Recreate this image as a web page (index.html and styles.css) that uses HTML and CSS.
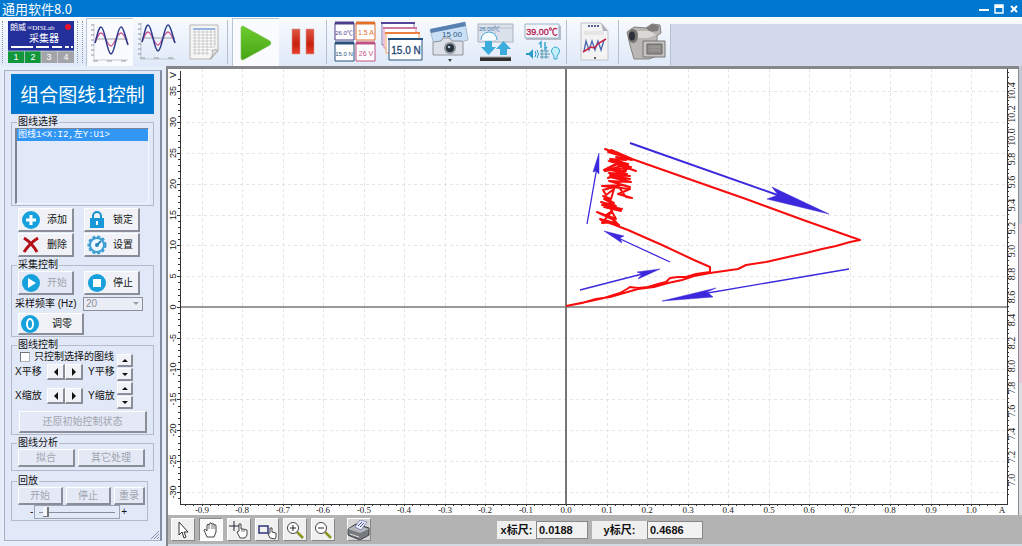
FILE: index.html
```html
<!DOCTYPE html>
<html lang="zh-CN">
<head>
    <meta charset="UTF-8">
    <title>通用软件8.0</title>
    <link rel="stylesheet" href="styles.css">
</head>
<body>
    <header class="titlebar">
        <h1>通用软件8.0</h1>
        <div class="window-buttons">
            <button aria-label="最小化"><svg width="10" height="10"><path d="M0 5h10v2H0z" fill="#fff"/></svg></button>
            <button aria-label="还原"><svg width="10" height="10"><path d="M1 1h8v8H1z" fill="none" stroke="#fff" stroke-width="1.4"/><path d="M1 1h8v3H1z" fill="#fff"/></svg></button>
            <button aria-label="关闭"><svg width="10" height="10"><path d="M2 2l6 6M8 2L2 8" stroke="#fff" stroke-width="2"/></svg></button>
        </div>
    </header>

    <nav class="toolbar">
        <span class="grip"></span>
        <button class="logger" aria-label="采集器">
            <svg width="66" height="42" viewBox="0 0 66 42">
                <rect width="66" height="42" fill="#24309a"/>
                <text x="2" y="9" font-size="8" fill="#fff">朗威</text>
                <text x="19" y="9" font-size="7" fill="#fff" class="serif">®DISLab</text>
                <circle cx="60" cy="6" r="3" fill="#e8102c"/>
                <text x="21" y="21" font-size="10" fill="#fff">采集器</text>
                <path d="M3 26h22M28 26h13M44 26h10M57 26h4M63 26h2" stroke="#fff" stroke-width="2"/>
                <rect y="30" width="33" height="12" fill="#12963c"/>
                <rect x="33" y="30" width="33" height="12" fill="#a2a4a8"/>
                <path d="M16.500 30v12M33 30v12M49.500 30v12M0 30h66" stroke="#dde" stroke-width=".7"/>
                <g font-size="9" fill="#fff" text-anchor="middle"><text x="8" y="39">1</text><text x="25" y="39">2</text><text x="41" y="39">3</text><text x="58" y="39">4</text></g>
            </svg>
        </button>
        <span class="grip wide"></span>
        <button class="tool on" aria-label="示波">
            <svg width="42" height="42" viewBox="0 0 42 42">
                <path d="M5 2v35M4 38h35" stroke="#b9bec8" stroke-width=".8"/>
                <path d="M2 3h3M2 8h3M2 13h3M2 18h3M2 23h3M2 28h3M2 33h3" stroke="#8c919c"/>
                <path d="M6 17h33" stroke="#888" stroke-width=".8"/>
                <path d="M4 39h5M18 39h5M32 39h5" stroke="#999"/>
                <path d="M6 21C9 13 10 11 12 11c4 0 6 13 10 13 3 0 6-13 10-13 3 0 4 5 7 11" fill="none" stroke="#cf5a94" stroke-width="1.300"/>
                <path d="M6 21C9 10 10 5 12 5c4 0 6 27 10 27S28 5 32 5c3 0 4 10 7 18" fill="none" stroke="#2c3a8c" stroke-width="1.500"/>
            </svg>
        </button>
        <button class="tool" aria-label="组合图线">
            <svg width="42" height="42" viewBox="0 0 42 42">
                <path d="M5 2v35M4 38h35" stroke="#b9bec8" stroke-width=".8"/>
                <path d="M2 3h3M2 8h3M2 13h3M2 18h3M2 23h3M2 28h3M2 33h3" stroke="#8c919c"/>
                <path d="M6 17h33" stroke="#888" stroke-width=".8"/>
                <path d="M4 37h5M18 37h5M32 37h5" stroke="#999"/>
                <path d="M6 21C9 13 10 11 12 11c4 0 6 13 10 13 3 0 6-13 10-13 3 0 4 5 7 11" fill="none" stroke="#cf5a94" stroke-width="1.300"/>
                <path d="M6 21C9 10 10 4 12 4c4 0 6 26 10 26S28 4 32 4c3 0 4 10 7 18" fill="none" stroke="#2c3a8c" stroke-width="1.500"/>
            </svg>
        </button>
        <button class="tool" aria-label="数据表">
            <svg width="32" height="38" viewBox="0 0 32 38">
                <path d="M2 2h28v26l-7 8H2z" fill="#f5f5f5" stroke="#b5b5b5"/>
                <path d="M6 5h20v25H6z" fill="#fff"/>
                <path d="M5 6h22" stroke="#8fb4e8" stroke-width="2"/>
                <path d="M5 9h22M5 12h22M5 15h22M5 18h22M5 21h22M5 24h22M5 27h20M5 30h16M7 5v27M11 5v27M15 5v27M19 5v27M23 5v20M27 5v18" stroke="#b9b9b9" stroke-width=".7" fill="none"/>
                <path d="M30 27c-3-1-6 0-6 1 1 3 0 6-2 8z" fill="#ddd" stroke="#999" stroke-width=".7"/>
            </svg>
        </button>
        <span class="sep"></span>
        <button class="tool on" aria-label="开始">
            <svg width="34" height="36" viewBox="0 0 34 36">
                <defs><linearGradient id="green" x2="0" y2="1"><stop stop-color="#6ccc2c"/><stop offset="1" stop-color="#48a418"/></linearGradient></defs>
                <path d="M4 1l27 15q2 2 0 4L4 35q-2 0-2-2V3q0-2 2-2z" fill="url(#green)" stroke="#7cbf54" stroke-width=".6"/>
            </svg>
        </button>
        <button class="tool" aria-label="暂停">
            <svg width="24" height="28" viewBox="0 0 24 28">
                <defs><linearGradient id="red" x2="0" y2="1"><stop stop-color="#e05848"/><stop offset=".6" stop-color="#c8200c"/><stop offset="1" stop-color="#e84030"/></linearGradient></defs>
                <path d="M1 1h8v25H1zM15 1h8v25h-8z" fill="url(#red)" stroke="#d89a94" stroke-width=".6"/>
            </svg>
        </button>
        <span class="sep"></span>
        <button class="tool" aria-label="数字窗口">
            <svg width="42" height="42" viewBox="0 0 42 42" class="digits">
                <path d="M1 2h19v17H1zM1 22h19v18H1zM22 2h19v17H22zM22 22h19v18H22z" fill="#fff"/>
                <path d="M1 2h19v17H1z" fill="none" stroke="#4c3c8c"/><path d="M1 2h19" stroke="#4c3c8c" stroke-width="3"/>
                <path d="M22 2h19v17H22z" fill="none" stroke="#e0702c"/><path d="M22 2h19" stroke="#e0702c" stroke-width="3"/>
                <path d="M1 22h19v18H1z" fill="none" stroke="#28507c"/><path d="M1 22h19" stroke="#28507c" stroke-width="3"/>
                <path d="M22 22h19v18H22z" fill="none" stroke="#c05080"/><path d="M22 22h19" stroke="#c05080" stroke-width="3"/>
                <g text-anchor="middle"><text class="long" x="10" y="14" fill="#4c3c8c">26.0℃</text><text x="32" y="14" fill="#e0702c">1.5 A</text><text class="long" x="10" y="35" fill="#28507c">15.0 N</text><text x="32" y="35" fill="#c05080">26 V</text></g>
            </svg>
        </button>
        <button class="tool" aria-label="层叠窗口">
            <svg width="42" height="40" viewBox="0 0 42 40">
                <g fill="#fff" stroke-width="1">
                    <path d="M1 1h32v22H1z" stroke="#8074b8"/><path d="M0 1h34" stroke="#544498" stroke-width="2"/>
                    <path d="M3 6h32v20H3z" stroke="#dc88b0"/><path d="M2 6h34" stroke="#cc78a0" stroke-width="2"/>
                    <path d="M5 11h33v20H5z" stroke="#f0a060"/><path d="M4 11h35" stroke="#ec8040" stroke-width="2"/>
                    <path d="M8 17h33v21H8z" stroke="#28507c"/><path d="M7 17h35" stroke="#28507c" stroke-width="2"/>
                </g>
                <text x="25" y="32" font-size="10" fill="#1c4474" stroke="#1c4474" stroke-width=".3" text-anchor="middle">15.0 N</text>
            </svg>
        </button>
        <button class="tool" aria-label="快照">
            <svg width="40" height="42" viewBox="0 0 40 42">
                <path d="M1 9L36 1l3 18L6 27z" fill="#c9dff5" stroke="#a8b8cc"/>
                <path d="M1 8l35-7 1 4L2 12z" fill="#5880b0"/>
                <text x="13" y="16" font-size="8" fill="#305880">15 00</text>
                <path d="M4 21l8-1 2-3h7l2 3h9q2 0 2 2v12H4z" fill="#dde0e6" stroke="#8c929c"/>
                <circle cx="21" cy="27" r="6" fill="#8c949c"/><circle cx="21" cy="27" r="4" fill="#26303c"/><circle cx="20" cy="26" r="1.300" fill="#b8c8d8"/>
                <path d="M19 38h4l-2 3z" fill="#444"/>
            </svg>
        </button>
        <button class="tool" aria-label="导入导出">
            <svg width="38" height="40" viewBox="0 0 38 40">
                <path d="M1 2h35v18H1z" fill="#dce2ec" stroke="#a9b2c0"/><path d="M2 6h34M18 2v18" stroke="#b8c0cc"/>
                <text x="2" y="9" font-size="6" fill="#447ab4">26.00℃</text>
                <path d="M4 18a8 8 0 0 1 16 0" fill="#f5fbff" stroke="#4ca8d8"/>
                <path d="M8 19h7v6h4l-7.500 8L4 25h4zM23 33h7v-6h4l-7.500-8-7.500 8h4z" fill="#3cacdc"/>
                <path d="M3 35h31v4H3z" fill="#34302e"/><path d="M3 35h31" stroke="#a6a6a6"/>
            </svg>
        </button>
        <button class="tool" aria-label="传感器">
            <svg width="38" height="40" viewBox="0 0 38 40">
                <path d="M2 4h35v14H2z" fill="#b5bcc8"/><path d="M1 2h34v14H1z" fill="#f4f8fc" stroke="#9cb0c4"/>
                <text x="18" y="13" font-size="9" fill="#b81850" stroke="#b81850" stroke-width=".3" text-anchor="middle">39.00℃</text>
                <path d="M17 26v-6l-2 2M21 20v7l2-2" fill="none" stroke="#38a8d0" stroke-width="1.500"/>
                <path d="M2 31h3l4-4v10l-4-4H2z" fill="#2c9ccc"/><path d="M11 29q2 3 0 6M13 28q3 4 0 8" stroke="#2c9ccc" fill="none"/>
                <path d="M16 29h9M16 32h10M16 35h9M18 27v10M22 27v10" stroke="#5a9ab0"/>
                <path d="M30 34l-2-3a4 4 0 1 1 7 0l-2 3v3h-3z" fill="#c4f0fa" stroke="#38a8d0"/>
            </svg>
        </button>
        <span class="sep"></span>
        <button class="tool" aria-label="实验报告">
            <svg width="30" height="40" viewBox="0 0 30 40">
                <path d="M1 1h20l7 8v29H1z" fill="#f3f3f4" stroke="#c4c4c8"/><path d="M21 1l7 8h-5z" fill="#b0b2c0"/>
                <path d="M8 4h12" stroke="#5860a0" stroke-width="2" stroke-dasharray="2 1"/><path d="M4 10h20M4 12h20" stroke="#ccc" stroke-width=".7"/>
                <path d="M4 29l2-10 3 9 3-9 3 9 3-9 3 9 3-10" fill="none" stroke="#4464b0" stroke-width="1.300"/>
                <path d="M3 30l8-5 3 1 5-5 7-4" fill="none" stroke="#cc2040" stroke-width="1.500"/><circle cx="15" cy="36" r="1" fill="#333"/>
            </svg>
        </button>
        <span class="sep"></span>
        <button class="tool" aria-label="录像">
            <svg width="42" height="38" viewBox="0 0 42 38">
                <path d="M1 9l7-5 12 1 6-4 8 1 1 8-4 3v20l-8 3H8L4 22z" fill="#b9b7b4" stroke="#83817f"/>
                <path d="M20 5l6-4 7 2-1 5-8 1z" fill="#7d7c7a"/>
                <path d="M12 8h12l6 4-8 3H12z" fill="#dad8d5"/>
                <ellipse cx="7" cy="13" rx="5" ry="7" fill="#777572"/><ellipse cx="6" cy="13" rx="3" ry="4.500" fill="#2d3038"/>
                <path d="M17 18h22v16H17z" fill="#c4c3bf" stroke="#777"/><path d="M21 21h15v10H21z" fill="#8c8b88" stroke="#686765"/>
                <path d="M23 24h11M23 27h11" stroke="#a4a29d"/>
            </svg>
        </button>
        <span class="toolbar-rest"></span>
    </nav>

    <main class="workspace">
        <aside class="sidebar">
            <div class="panel">
                <h2>组合图线1控制</h2>

                <fieldset>
                    <legend>图线选择</legend>
                    <ul class="listbox">
                        <li class="selected">图线1&lt;X:I2,左Y:U1&gt;</li>
                    </ul>
                </fieldset>

                <div class="button-grid outer">
                    <button class="btn"><svg width="20" height="20"><circle cx="10" cy="10" r="9" fill="#16a0dc"/><path d="M10 5v10M5 10h10" stroke="#fff" stroke-width="3"/></svg>添加</button>
                    <button class="btn"><svg width="20" height="20"><path d="M6 9V6a4 4 0 0 1 8 0v3" fill="none" stroke="#1890cc" stroke-width="2"/><path d="M3 8h14v10H3z" fill="#1898d8"/><path d="M10 11v4" stroke="#fff" stroke-width="2"/></svg>锁定</button>
                    <button class="btn"><svg width="20" height="20"><path d="M3 3q8 5 13 14M17 3Q9 8 3 17" fill="none" stroke="#b41018" stroke-width="3"/></svg>删除</button>
                    <button class="btn"><svg width="20" height="20"><circle cx="10" cy="10" r="7" fill="#eef8ff" stroke="#3c9cd4" stroke-width="2"/><circle cx="10" cy="10" r="8.500" fill="none" stroke="#3c9cd4" stroke-width="2" stroke-dasharray="3 2"/><circle cx="10" cy="10" r="2" fill="#2c84bc"/><path d="M10 10l4-4" stroke="#2c84bc" stroke-width="2"/></svg>设置</button>
                </div>

                <fieldset>
                    <legend>采集控制</legend>
                    <div class="button-grid">
                        <button class="btn" disabled><svg width="20" height="20"><circle cx="10" cy="10" r="9" fill="#16a0dc"/><path d="M7 5l8 5-8 5z" fill="#fff"/></svg>开始</button>
                        <button class="btn"><svg width="20" height="20"><circle cx="10" cy="10" r="9" fill="#16a0dc"/><path d="M6 6h8v8H6z" fill="#fff"/></svg>停止</button>
                    </div>
                    <div class="rate">
                        <label for="rate">采样频率 (Hz)</label>
                        <span class="combo"><select id="rate" disabled><option>20</option></select></span>
                    </div>
                    <button class="btn zero"><svg width="20" height="20"><circle cx="10" cy="10" r="9" fill="#16a0dc"/><ellipse cx="10" cy="10" rx="3" ry="5" fill="none" stroke="#fff" stroke-width="2"/></svg>调零</button>
                </fieldset>

                <fieldset class="control">
                    <legend>图线控制</legend>
                    <div class="control-body">
                        <div class="control-left">
                            <div class="check"><input type="checkbox" id="only"><label for="only">只控制选择的图线</label></div>
                            <div class="shift"><span>X平移</span><button class="btn" aria-label="左移"><i class="left"></i></button><button class="btn" aria-label="右移"><i class="right"></i></button><span>Y平移</span></div>
                            <div class="shift"><span>X缩放</span><button class="btn" aria-label="横向缩小"><i class="left"></i></button><button class="btn" aria-label="横向放大"><i class="right"></i></button><span>Y缩放</span></div>
                        </div>
                        <div class="spin">
                            <button class="btn" aria-label="上移"><i class="up"></i></button>
                            <button class="btn" aria-label="下移"><i class="down"></i></button>
                            <button class="btn" aria-label="纵向放大"><i class="up"></i></button>
                            <button class="btn" aria-label="纵向缩小"><i class="down"></i></button>
                        </div>
                    </div>
                    <button class="btn restore" disabled>还原初始控制状态</button>
                </fieldset>

                <fieldset class="analysis">
                    <legend>图线分析</legend>
                    <div class="row">
                        <button class="btn" disabled>拟合</button>
                        <button class="btn" disabled>其它处理</button>
                    </div>
                </fieldset>

                <fieldset class="replay">
                    <legend>回放</legend>
                    <div class="row">
                        <button class="btn" disabled>开始</button>
                        <button class="btn" disabled>停止</button>
                        <button class="btn" disabled>重录</button>
                    </div>
                    <div class="speed">
                        <span>-</span><input type="range" min="0" max="10" value="1" aria-label="回放速度"><span>+</span>
                    </div>
                </fieldset>
                <svg class="resize" width="8" height="8"><path d="M0 8l8-8M3 8l5-5M6 8l2-2" stroke="#8890a0"/></svg>
            </div>
        </aside>

        <section class="view">
            <div class="plot">
                <!-- origin of the viewBox is the zero point of both axes -->
                <svg id="chart" viewBox="-398 -238 850 446">
                    <g id="grid"></g>
                    <path class="zero-x" d="M-386 0H441"/>
                    <path class="zero-y" d="M0-238V197"/>
                    <path class="axis" d="M-386-236V197H441V-238"/>
                    <g id="ticks"></g>
                    <g id="labels">
                        <text class="y-label" transform="translate(-390 -232) rotate(-90)">V</text>
                        <text class="x-label" x="436" y="206">A</text>
                    </g>
                    <path class="trace" d="M0-1L20-5 38-9 54-14 61-18 64-20 72-19 82-20 92-23 100-25 104-29 112-30 120-30 130-33 144-35 144-40 128-47 96-62 62-77 54-80
                        L49-82 35-87 49-84 34-88 52-82 36-86 53-82 46-88 31-95 44-90 50-85 36-84 46-96 40-92 50-88 44-99 55-96 38-100 56-98 36-102 50-99 35-105 50-101 38-108
                        L48-104 37-111 45-108 48-118 40-112 37-117 52-121 60-110 66-109 52-113 64-118 36-121 56-122 64-120 43-126 65-125 44-130 64-128 44-132 64-131 43-134 61-133
                        L45-137 60-136 42-129 65-140 52-138 39-136 55-141 70-136 50-143 38-137 56-145 64-140 43-146 62-143 44-148 60-147 50-150 66-147
                        L39-158 66-148 50-155 42-155 66-148 45-157 66-148 120-129 180-108 240-86 294-67 284-65 270-61 256-58 240-54 222-50 200-45 180-42 172-38 158-36 144-34 128-31 116-27 102-24 88-20 72-18 58-14 44-10 30-8 16-4 0-1"/>
                    <g class="arrow">
                        <path d="M14-17L80-34M104-45L50-70M21-83L31-140M283-38L130-12"/>
                        <path class="strong" d="M64-164L220-109"/>
                        <path class="head" d="M94-38L71-35 76-33 72-28zM38-76L58-71 54-69 56-64zM33-154L27-135 30-136 33-133zM263-93L206-120 212-112 201-108zM96-6L150-19 141-15 147-10z"/>
                    </g>
                </svg>
            </div>

            <footer class="statusbar">
                <div class="modes">
                    <button aria-label="选择"><svg width="22" height="20"><path d="M7 2v13l3-3 2 6 2-1-2-5h4z" fill="#fff" stroke="#333"/></svg></button>
                    <button class="on" aria-label="拖动"><svg width="22" height="20"><path d="M7 17L4 10q1-2 3 1V5q1-2 2 0l1-2q1-1 2 1 2-1 2 1 2-1 2 1v6l-2 5z" fill="#fff" stroke="#444"/><path d="M9 5v4M12 4v5M14 5v4" stroke="#777"/></svg></button>
                    <button aria-label="取点"><svg width="22" height="20"><path d="M6 1v10M1 6h10" stroke="#223"/><path d="M12 18l-3-6 2-1V4h2v5h2l4 1v5l-2 3z" fill="#fff" stroke="#444"/><path d="M14 9v3M16 9v3" stroke="#777"/></svg></button>
                    <button aria-label="框选"><svg width="22" height="20"><path d="M3 6h9v7H3z" fill="none" stroke="#2c3478" stroke-width="1.500"/><path d="M14 18l-2-4 2-1V8h2v4l4 1v4l-1 2z" fill="#fff" stroke="#444"/></svg></button>
                    <button aria-label="放大"><svg width="22" height="20"><path d="M13 12l6 6" stroke="#8c9420" stroke-width="2.500"/><circle cx="9" cy="8" r="5.500" fill="#fff" stroke="#444"/><path d="M6 8h6M9 5v6" stroke="#222"/></svg></button>
                    <button aria-label="缩小"><svg width="22" height="20"><path d="M13 12l6 6" stroke="#8c9420" stroke-width="2.500"/><circle cx="9" cy="8" r="5.500" fill="#fff" stroke="#444"/><path d="M6 8h6" stroke="#222"/></svg></button>
                    <button class="print" aria-label="打印"><svg width="24" height="20"><path d="M1 9l8-5 13 4v7l-9 5L1 15z" fill="#777b80" stroke="#3c3e42"/><path d="M1 9l8-4 13 4-9 4z" fill="#b4b8bc"/><path d="M8 7l5-7 7 2-6 8z" fill="#eef0fa" stroke="#6068a0" stroke-width=".7"/><path d="M11 6l4-4M13 7l4-4" stroke="#404890"/><path d="M3 14l9 3" stroke="#ddd"/></svg></button>
                </div>
                <div class="readout">
                    <label for="xpos">x标尺:</label><input id="xpos" value="0.0188" readonly>
                    <label for="ypos" class="y-name">y标尺:</label><input id="ypos" value="0.4686" readonly>
                </div>
            </footer>
        </section>
        <div class="edge"></div>
    </main>

    <script>
        const LEFT = -386, RIGHT = 441, TOP = -238, BOTTOM = 197;
        const X_STEP = 40.5;   // 0.1 A
        const Y_STEP = 30.8;   // 5 V
        const R_STEP = 22.9;   // 0.2 on the right axis

        let grid = '';
        let ticks = '';
        let labels = '';

        function line(x1, y1, x2, y2) {
            return `<path d="M${x1} ${y1}L${x2} ${y2}"/>`;
        }

        for (let i = -9; i <= 10; i++) {
            const x = Math.round(i * X_STEP);
            grid += line(x, TOP, x, BOTTOM);
            labels += `<text class="x-label" x="${x}" y="206">${(i / 10).toFixed(1)}</text>`;
        }
        for (let i = -47; i <= 53; i++) {
            const x = Math.round(i * X_STEP / 5);
            if (x > LEFT && x < RIGHT) ticks += line(x, BOTTOM, x, BOTTOM + 2);
        }

        for (let i = -6; i <= 7; i++) {
            const y = Math.round(-i * Y_STEP);
            grid += line(LEFT, y, RIGHT, y);
            labels += `<text class="y-label" transform="translate(-390 ${y}) rotate(-90)">${i * 5}</text>`;
        }
        for (let i = -31; i <= 37; i++) {
            const y = Math.round(-i * Y_STEP / 5);
            ticks += line(i % 5 ? LEFT - 2 : LEFT - 3, y, LEFT, y);
        }

        for (let i = 0; i <= 17; i++) {
            const y = Math.round(173 - i * R_STEP);
            labels += `<text class="r-label" transform="translate(449 ${y}) rotate(-90)">${(7 + i / 5).toFixed(1)}</text>`;
        }
        for (let i = -3; i <= 89; i++) {
            const y = Math.round(173 - i * R_STEP / 5);
            ticks += line(RIGHT, y, RIGHT + 2, y);
        }

        document.getElementById('grid').innerHTML = grid;
        document.getElementById('ticks').innerHTML = ticks;
        document.getElementById('labels').innerHTML += labels;
    </script>
</body>
</html>
```
FILE: styles.css
```css
* {
    box-sizing: border-box;
}
body {
    margin: 0;
    min-height: 100vh;
    display: flex;
    flex-direction: column;
    background-color: #dfe8f6;
    font-family: "Liberation Sans", "Noto Sans CJK SC", sans-serif;
    font-size: 10px;
    line-height: 12px;
    color: #111;
}
button, input, select {
    font: inherit;
    color: inherit;
    margin: 0;
    padding: 0;
}
button {
    border: none;
    background: none;
}
svg {
    display: block;
    flex: none;
}
.titlebar {
    display: flex;
    justify-content: space-between;
    align-items: center;
    height: 17px;
    padding: 0 3px 0 2px;
    background-color: #0078d0;
    color: #fff;
}
.titlebar h1 {
    margin: 0;
    font-size: 13px;
    font-weight: normal;
    line-height: 17px;
    font-family: "Noto Sans CJK SC", sans-serif;
}
.window-buttons {
    display: flex;
    gap: 5px;
}

/* toolbar */
.toolbar {
    display: flex;
    height: 49px;
    padding-top: 1px;
    background: linear-gradient(#f8fbff, #dfe9f8);
}
.grip {
    width: 3px;
    margin: 3px 3px 3px 2px;
    border-left: 1px dotted #8c98b0;
}
.grip.wide {
    width: 6px;
    margin: 3px 3px;
    border-right: 1px dotted #8c98b0;
}
.logger {
    padding-top: 3px;
    display: flex;
}
.serif {
    font-family: "Liberation Serif", serif;
}
.tool {
    width: 47px;
    display: flex;
    align-items: center;
    justify-content: center;
}
.tool.on {
    background-color: #f9fbfe;
    border-top: 1px solid #b8c4d8;
    border-left: 1px solid #b8c4d8;
}
.digits text {
    font-size: 7px;
}
.digits .long {
    font-size: 6px;
}
.sep {
    width: 5px;
    margin: 2px 0;
    border-left: 1px solid #b4bfd0;
}
.toolbar-rest {
    flex: 1;
    margin-top: 6px;
    border-left: 1px solid #b4bfd0;
    background-color: #d5d9ec;
}

.workspace {
    flex: 1;
    display: flex;
}

/* left panel */
.sidebar {
    width: 166px;
    padding: 4px 4px 5px 4px;
    background-color: #e6eefa;
}
.panel {
    height: 100%;
    padding: 3px 6px 0 6px;
    display: flex;
    flex-direction: column;
    border: 1px solid #a8b0c4;
    border-right: 2px solid #848ca4;
    background-color: #e1e8f7;
    position: relative;
}
.panel h2 {
    margin: 0 0 2px;
    font-size: 19px;
    line-height: 40px;
    font-weight: normal;
    font-family: "Noto Sans CJK SC", sans-serif;
    text-align: center;
    background-color: #0078d0;
    color: #fff;
}
fieldset {
    min-width: 0;
    margin: 0 0 2px;
    padding: 0 4px 1px 3px;
    border: 1px solid #b4bacb;
}
legend {
    margin-left: 2px;
    padding: 0 1px;
}
.listbox {
    height: 76px;
    margin: 0;
    padding: 0;
    list-style: none;
    border: 1px solid #f4f6fc;
    border-top-color: #7c8498;
    border-left: 2px solid #7c8498;
}
.listbox li {
    padding-left: 1px;
    font: 9px/12px "Liberation Mono", "Noto Sans CJK SC", monospace;
}
.listbox .selected {
    background-color: #3296f5;
    color: #fff;
}
.btn {
    display: flex;
    align-items: center;
    justify-content: center;
    background-color: #f0f2f7;
    border: 1px solid #fff;
    border-right: 2px solid #8a8e98;
    border-bottom: 2px solid #8a8e98;
}
.btn:disabled {
    background-color: #e4e9f5;
    color: #a0a4ae;
}
.button-grid {
    display: grid;
    grid-template-columns: 56px 56px;
    gap: 1px 10px;
    padding-left: 3px;
}
.button-grid.outer {
    padding-left: 7px;
    margin-bottom: 2px;
}
.button-grid .btn {
    height: 24px;
    gap: 6px;
    justify-content: flex-start;
    padding-left: 2px;
}
.rate {
    display: flex;
    align-items: center;
    gap: 4px;
    margin: 2px 0;
}
.rate label {
    width: 64px;
    white-space: nowrap;
}
.combo {
    position: relative;
    width: 60px;
}
.combo select {
    display: block;
    width: 100%;
    height: 14px;
    padding-left: 2px;
    appearance: none;
    border: 1px solid #8c909c;
    border-radius: 0;
    background-color: #eaedf5;
    color: #8c909a;
    opacity: 1;
}
.combo::after {
    content: "";
    position: absolute;
    right: 4px;
    top: 5px;
    border: 3px solid transparent;
    border-top-color: #9a9ea8;
}
.zero {
    width: 66px;
    height: 22px;
    margin-left: 3px;
    gap: 12px;
    justify-content: flex-start;
    padding-left: 1px;
}
.control-body {
    display: flex;
    justify-content: space-between;
    padding-right: 16px;
}
.control-left {
    flex: none;
}
.check {
    display: flex;
    align-items: center;
    gap: 4px;
    padding-left: 5px;
}
.check input {
    appearance: none;
    width: 10px;
    height: 10px;
    background-color: #fff;
    border: 1px solid #b0b4c0;
    border-top-color: #70747e;
    border-left-color: #70747e;
}
.shift {
    display: flex;
    align-items: center;
    margin: 1px 0 8px;
    white-space: nowrap;
}
.shift span {
    width: 28px;
}
.shift .btn {
    width: 18px;
    height: 16px;
}
.shift .btn + .btn {
    margin-right: 5px;
}
.shift .btn:first-of-type {
    margin-left: 4px;
}
.shift:last-child {
    margin-bottom: 0;
}
.btn i {
    border: 3px solid transparent;
}
.btn .left {
    border-width: 4px;
    border-left-width: 0;
    border-right-color: #111;
}
.btn .right {
    border-width: 4px;
    border-right-width: 0;
    border-left-color: #111;
}
.btn .up {
    border-top-width: 0;
    border-bottom-color: #111;
}
.btn .down {
    border-bottom-width: 0;
    border-top-color: #111;
}
.spin {
    display: flex;
    flex-direction: column;
    gap: 1px;
    padding-top: 3px;
}
.spin .btn {
    width: 16px;
    height: 13px;
}
.restore {
    width: 128px;
    height: 22px;
    margin: 2px 0 0 4px;
}
.row {
    display: flex;
    gap: 3px;
    padding-left: 3px;
}
.row .btn {
    height: 18px;
}
.analysis {
    margin-bottom: 4px;
    padding-bottom: 3px;
}
.analysis .btn:first-child {
    width: 57px;
}
.analysis .btn:last-child {
    width: 67px;
}
.replay {
    margin-right: 6px;
    padding-right: 2px;
}
.replay .btn {
    flex: 3;
}
.replay .btn:last-child {
    flex: 2;
}
.speed {
    display: flex;
    align-items: center;
    padding: 0 18px 0 15px;
    gap: 1px;
}
.speed input {
    flex: 1;
    min-width: 0;
    height: 14px;
    appearance: none;
    border: 1px solid #9ca2b2;
    background: linear-gradient(#888e9c, #888e9c) center / 76px 1px no-repeat;
}
.speed input::-webkit-slider-thumb {
    appearance: none;
    width: 6px;
    height: 10px;
    background-color: #f4f6fa;
    border-right: 2px solid #777;
    border-bottom: 1px solid #777;
}
.resize {
    position: absolute;
    right: 1px;
    bottom: 1px;
}

/* chart */
.view {
    flex: 1;
    min-width: 0;
    display: flex;
    flex-direction: column;
    border-top: 3px solid #85868c;
    border-left: 2px solid #85868c;
}
.plot {
    background-color: #fff;
}
#chart {
    width: 100%;
    height: auto;
}
#grid path {
    stroke: #e4e4e4;
    stroke-dasharray: 3 3;
    shape-rendering: crispEdges;
}
#ticks path, .axis {
    fill: none;
    stroke: #333;
    shape-rendering: crispEdges;
}
.zero-x {
    stroke: #999;
    stroke-width: 2;
}
.zero-y {
    stroke: #777;
    stroke-width: 2;
}
#labels text {
    font: 10px "Liberation Serif", serif;
    fill: #222;
    text-anchor: middle;
}
#labels .x-label {
    font-size: 9px;
}
#labels .y-label {
    font-family: "Liberation Sans", sans-serif;
    font-size: 9px;
}
.trace {
    fill: none;
    stroke: #f80c0c;
    stroke-width: 2;
    stroke-linejoin: round;
}
.arrow path {
    stroke: #3c28dc;
    stroke-width: 1.3;
}
.arrow .strong {
    stroke-width: 2;
}
.arrow .head {
    fill: #3c28dc;
    stroke-width: 0.5;
}
.edge {
    width: 4px;
    border-left: 1px solid #8c8c94;
    background: linear-gradient(#c3cad6 33%, #e4cad8 33% 66%, #dcdee2 66%);
}

/* bottom bar */
.statusbar {
    flex: 1;
    display: flex;
    align-items: center;
    padding-left: 3px;
    background-color: #b3b3b3;
    border-bottom: 2px solid #d4dae2;
    margin-right: -4px;
    z-index: 1;
}
.modes {
    display: flex;
    gap: 4px;
}
.modes button {
    width: 24px;
    height: 23px;
    display: flex;
    align-items: center;
    justify-content: center;
    background-color: #f0f0f0;
    border: 1px solid #fff;
    border-right-color: #888;
    border-bottom-color: #888;
}
.modes .on {
    background-color: #fafafa;
    border-color: #888 #fff #fff #888;
}
.modes .print {
    margin-left: 8px;
    background-color: #d4d4d4;
}
.readout {
    display: flex;
    margin-left: 126px;
    font-size: 11px;
    font-weight: bold;
}
.readout label {
    width: 39px;
    background-color: #efefef;
    line-height: 18px;
    text-align: center;
    white-space: nowrap;
}
.readout .y-name {
    width: 55px;
    margin-left: 4px;
}
.readout input {
    width: 52px;
    height: 18px;
    padding-left: 2px;
    border: 1px solid #888;
    border-radius: 0;
    background-color: #f2f2f2;
}
.readout .y-name + input {
    width: 56px;
}
```
